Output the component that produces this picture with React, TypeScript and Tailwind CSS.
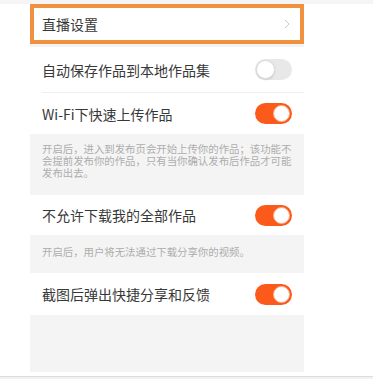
import React from "react";

function Toggle({ on }: { on: boolean }) {
  return on ? (
    <div className="relative h-[21px] w-[37px] rounded-full bg-[#fb5a1b]">
      <div className="absolute right-[2px] top-[2px] h-[17px] w-[17px] rounded-full border border-[#f3b08f] bg-white" />
    </div>
  ) : (
    <div className="relative h-[21px] w-[37px] rounded-full bg-[#e8e8e8]">
      <div className="absolute left-[1px] top-[1px] h-[19px] w-[19px] rounded-full border border-[#dcdcdc] bg-white shadow-[0_1px_2px_rgba(0,0,0,0.12)]" />
    </div>
  );
}

function Row({ label, on, h, divider }: { label: string; on: boolean; h: string; divider?: boolean }) {
  return (
    <div className={`bg-white ${h}`}>
      <div
        className={
          divider
            ? "ml-[12px] flex h-full items-center justify-between border-b border-[#eeeeee] pr-[12px]"
            : "ml-[12px] flex h-full items-center justify-between pr-[12px]"
        }
      >
        <span className="text-[14px] leading-none text-[#383838]">{label}</span>
        <Toggle on={on} />
      </div>
    </div>
  );
}

export default function App() {
  return (
    <div
      className="relative h-[379px] w-[373px] overflow-hidden bg-white"
      style={{ fontFamily: '"Noto Sans CJK SC", "Noto Sans", sans-serif' }}
    >
      <div className="h-[4px] bg-[#f5f5f5]" />
      <div className="ml-[30px] w-[274px] bg-[#f4f4f4]">
        <div className="flex h-[40px] items-center justify-between border-4 border-[#f0913f] bg-white pl-[8px] pr-[10px]">
          <span className="text-[14px] leading-none text-[#383838]">直播设置</span>
          <svg width="6" height="10" viewBox="0 0 6 10" fill="none">
            <polyline points="1,1 5,5 1,9" stroke="#cacaca" strokeWidth="1" />
          </svg>
        </div>
        <div className="h-[3px]" />
        <Row label="自动保存作品到本地作品集" on={false} h="h-[46px]" divider />
        <Row label="Wi-Fi下快速上传作品" on h="h-[41px]" />
        <div className="h-[61px] pl-[12px] pr-[8px] pt-[9px] text-[10.4px] leading-[12px] text-[#adadad]">
          开启后，进入到发布页会开始上传你的作品；该功能不会提前发布你的作品，只有当你确认发布后作品才可能发布出去。
        </div>
        <Row label="不允许下载我的全部作品" on h="h-[40px]" />
        <div className="h-[38px] pl-[12px] pr-[8px] pt-[11px] text-[10.4px] leading-[12px] text-[#adadad]">
          开启后，用户将无法通过下载分享你的视频。
        </div>
        <Row label="截图后弹出快捷分享和反馈" on h="h-[42px]" />
        <div className="h-[57px]" />
      </div>
      <div className="absolute bottom-0 left-0 h-[3px] w-full border-t border-[#dddddd] bg-[#f2f2f2]" />
    </div>
  );
}
